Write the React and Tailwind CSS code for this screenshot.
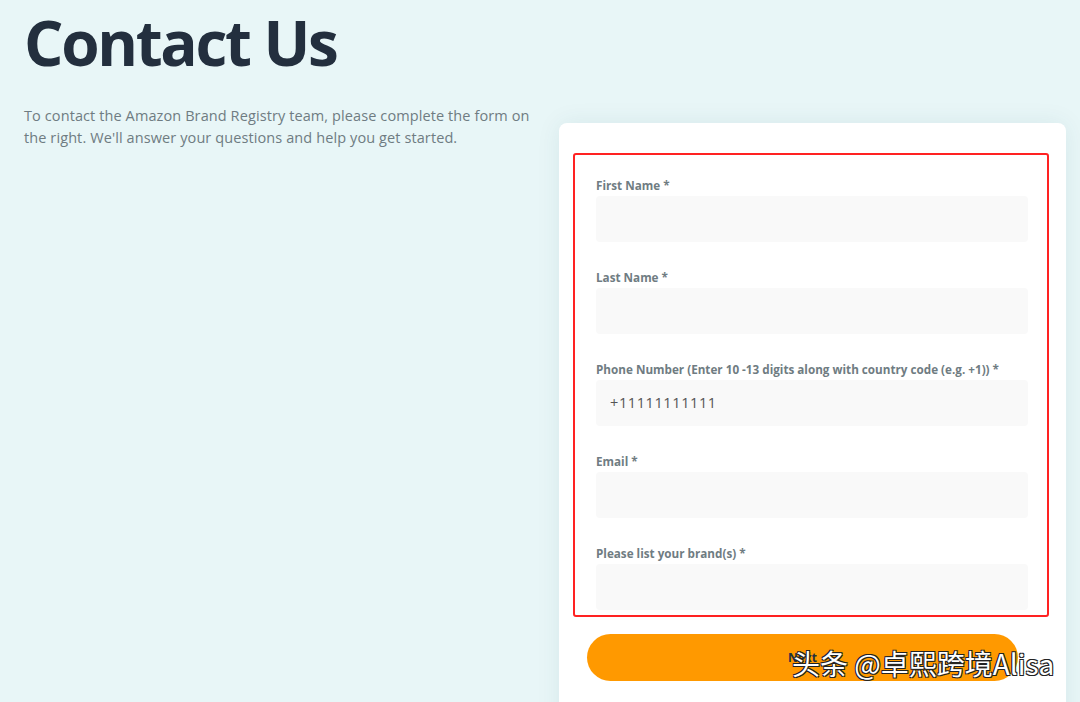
import React from "react";

const fields = [
  { label: "First Name *", value: "" },
  { label: "Last Name *", value: "" },
  { label: "Phone Number (Enter 10 -13 digits along with country code (e.g. +1)) *", value: "+11111111111" },
  { label: "Email *", value: "" },
  { label: "Please list your brand(s) *", value: "" },
];

export default function App() {
  return (
    <div
      className="relative w-[1080px] h-[702px] overflow-hidden bg-[#e8f6f7] flex"
      style={{ fontFamily: "'Open Sans', 'Noto Sans', sans-serif" }}
    >
      {/* Left intro */}
      <div className="w-[559px] pl-6 pr-4">
        <h1 className="mt-[4px] text-[62px] leading-[76px] font-bold text-[#232f3e] tracking-[-2.3px]">
          Contact Us
        </h1>
        <p className="mt-[25px] w-[512px] text-[14.5px] leading-[22px] text-[#6f7c82] tracking-[0.1px]">
          To contact the Amazon Brand Registry team, please complete the form on the right. We'll answer your questions and help you get started.
        </p>
      </div>

      {/* Form card */}
      <div className="mt-[123px] w-[507px] h-[620px] bg-white rounded-lg shadow-[0_0_24px_rgba(0,80,90,0.08)] pl-[14px] pt-[30px]">
        <div className="w-[476px] border-2 border-[#ff2222] rounded-[3px] pl-[21px] pr-[19px] pt-[23px] pb-[5px]">
          {fields.map((f, i) => (
            <div key={i} className={i > 0 ? "mt-[28px]" : ""}>
              <label className="block text-[11.7px] leading-[15px] font-bold text-[#6f7c82]">{f.label}</label>
              <div className="mt-[3px] h-[46px] rounded bg-[#f9f9f9] flex items-center px-[14px] text-[14.5px] text-[#555] tracking-[0.6px]">
                {f.value}
              </div>
            </div>
          ))}
        </div>
        <button className="mt-[17px] ml-[14px] w-[431px] h-[47px] rounded-[24px] bg-[#ff9900] text-[12px] font-bold text-[#232f3e] flex items-center justify-center">
          Next
        </button>
      </div>

      {/* Watermark */}
      <div
        className="absolute left-[792px] top-[645px] text-[28px] leading-[36px] text-white whitespace-nowrap"
        style={{
          fontFamily: "'Noto Sans CJK SC', 'Noto Sans', sans-serif",
          textShadow: "1px 1px 0 #222, -1px -1px 0 #222, 1px -1px 0 #222, -1px 1px 0 #222",
        }}
      >
        头条 @卓熙跨境Alisa
      </div>
    </div>
  );
}
